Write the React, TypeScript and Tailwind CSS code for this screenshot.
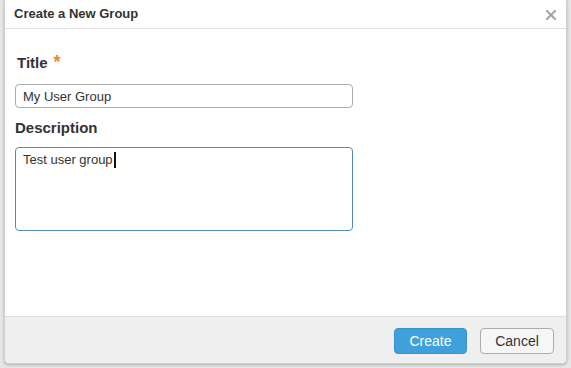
import { useState } from "react";

export default function App() {
  const [title, setTitle] = useState("My User Group");
  const [description, setDescription] = useState("Test user group");

  return (
    <div
      className="h-[368px] w-[571px] overflow-hidden bg-[#e6e6e6]"
      style={{ fontFamily: '"Liberation Sans", Arial, sans-serif' }}
    >
      <div className="ml-[4px] mt-[-3px] flex h-[367px] w-[563px] flex-col overflow-hidden rounded-[5px] border border-[#cfcfcf] bg-white shadow-[0_1px_3px_rgba(0,0,0,0.25)]">
        {/* Header */}
        <div className="flex h-[31px] shrink-0 items-end justify-between border-b border-[#e2e2e2] pb-[6px] pl-[9px] pr-[10px]">
          <h2 className="text-[13px] font-bold leading-[16px] text-[#333]">
            Create a New Group
          </h2>
          <button className="text-[#999]" aria-label="Close">
            <svg width="10" height="10" viewBox="0 0 10 10" className="mb-[2px]">
              <path
                d="M1 1L9 9M9 1L1 9"
                stroke="#a3a3a3"
                strokeWidth="2"
                strokeLinecap="square"
              />
            </svg>
          </button>
        </div>

        {/* Body */}
        <div className="flex-1 pl-[10px] pt-[25px]">
          <label className="ml-[2px] flex items-start text-[15px] font-bold leading-[18px] text-[#333]">
            Title
            <span className="ml-[6px] mt-[-1px] text-[18px] text-[#e8892c]">*</span>
          </label>
          <input
            type="text"
            value={title}
            onChange={(e) => setTitle(e.target.value)}
            className="mt-[12px] block h-[24px] w-[338px] rounded-[4px] border border-[#acacac] px-[7px] text-[13px] text-[#333] focus:outline-none"
          />
          <label className="mt-[11px] block text-[15px] font-bold leading-[18px] text-[#333]">
            Description
          </label>
          <div className="relative mt-[10px] h-[84px] w-[338px] rounded-[4px] border border-[#4f8db5] px-[7px] pt-[4px] text-[13px] leading-[16px] text-[#333]">
            <textarea
              value={description}
              onChange={(e) => setDescription(e.target.value)}
              className="h-full w-full resize-none bg-transparent outline-none"
            />
            <span className="absolute left-[98px] top-[4px] h-[16px] w-[2px] bg-[#111]" />
          </div>
        </div>

        {/* Footer */}
        <div className="flex h-[47px] shrink-0 items-start justify-end gap-[13px] border-t border-[#dcdcdc] bg-[#efefef] pr-[12px] pt-[11px]">
          <button className="h-[26px] w-[73px] rounded-[4px] border border-[#3a93cb] bg-[#40a0dc] text-[14px] text-white">
            Create
          </button>
          <button className="h-[26px] w-[74px] rounded-[4px] border border-[#acacac] bg-[#f6f6f6] text-[14px] text-[#333]">
            Cancel
          </button>
        </div>
      </div>
    </div>
  );
}
